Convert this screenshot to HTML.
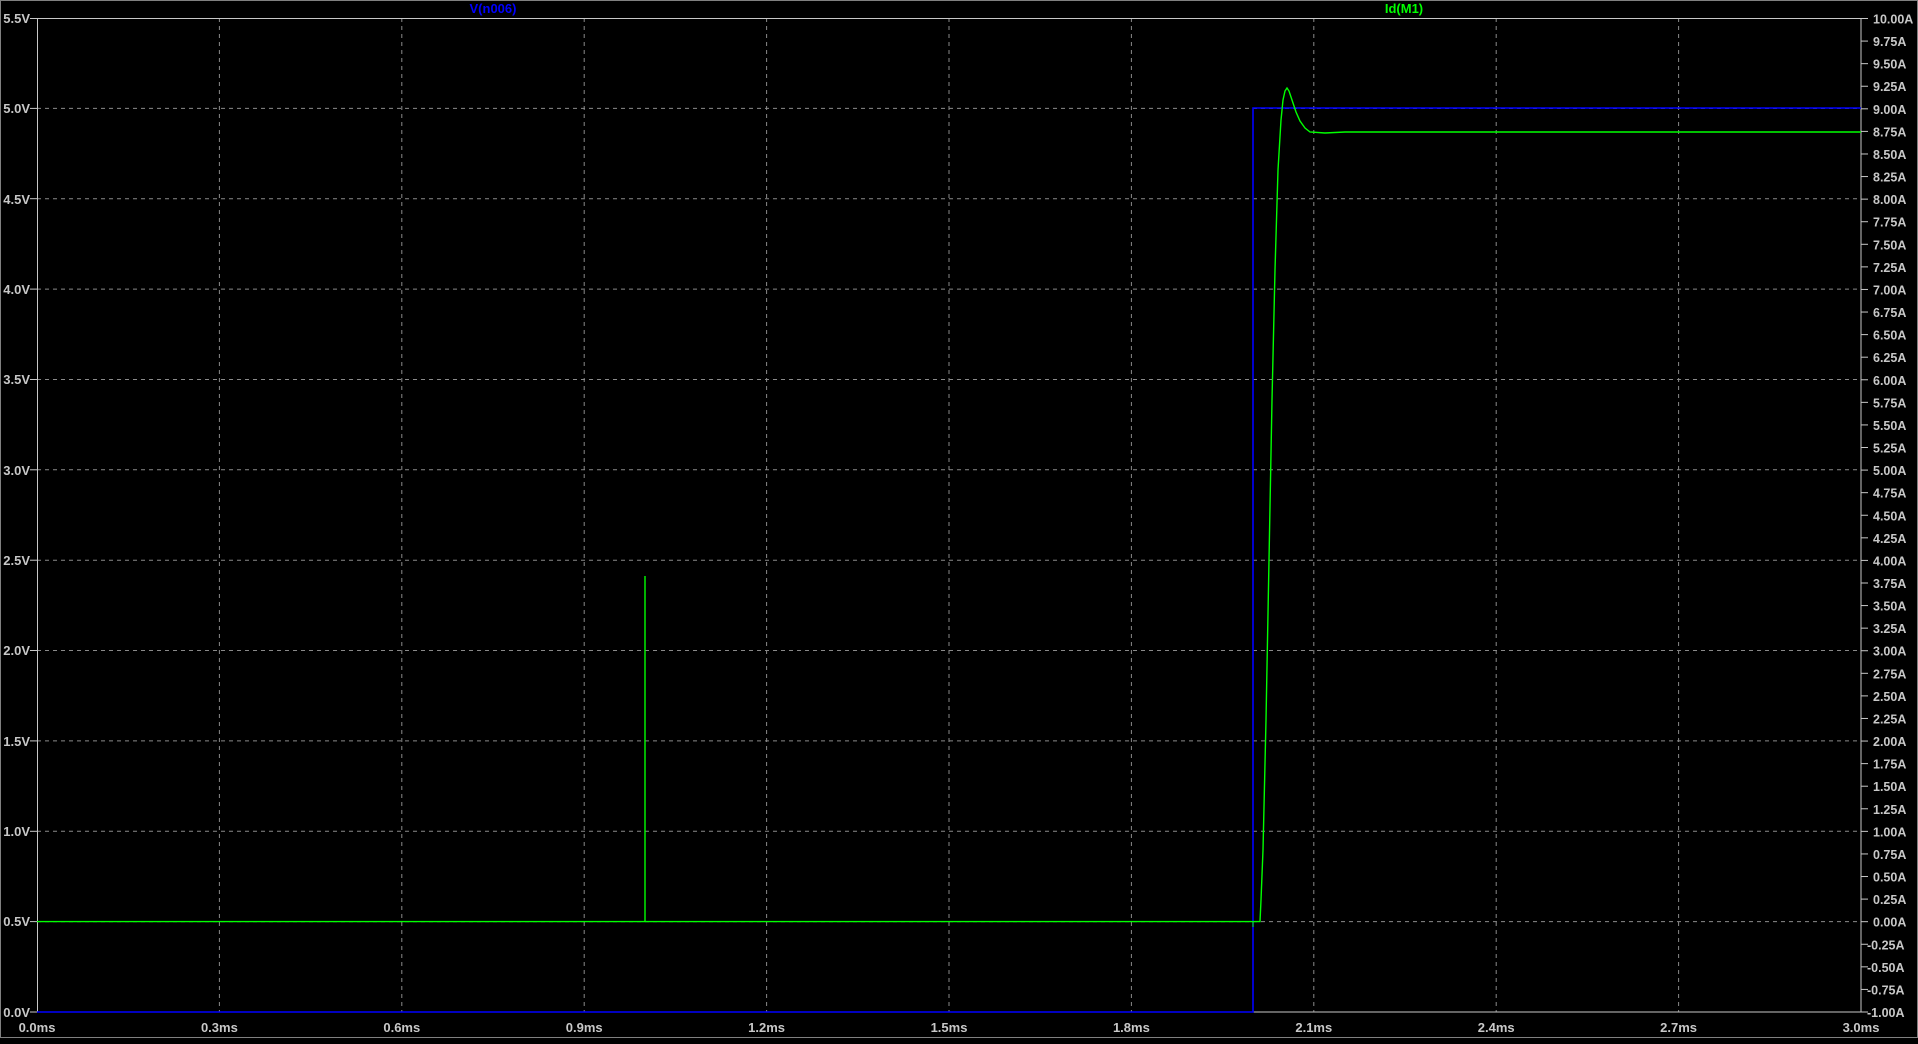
<!DOCTYPE html><html><head><style>html,body{margin:0;background:#000;overflow:hidden}</style></head><body>
<svg width="1918" height="1039" xmlns="http://www.w3.org/2000/svg" font-family="Liberation Sans, sans-serif" font-size="13" font-weight="bold">
<rect width="1918" height="1039" fill="#000"/>
<rect x="0.5" y="0.5" width="1917" height="1037" fill="none" stroke="#808080"/>
<g id="g" stroke="#808080" stroke-dasharray="4,4" stroke-width="1">
<script>/* none */</script>
</g>
<g stroke="#8a8a8a" stroke-dasharray="4,4">
<line x1="37" x2="1861" y1="108.4" y2="108.4"/><line x1="37" x2="1861" y1="198.7" y2="198.7"/><line x1="37" x2="1861" y1="289.1" y2="289.1"/><line x1="37" x2="1861" y1="379.5" y2="379.5"/><line x1="37" x2="1861" y1="469.8" y2="469.8"/><line x1="37" x2="1861" y1="560.2" y2="560.2"/><line x1="37" x2="1861" y1="650.5" y2="650.5"/><line x1="37" x2="1861" y1="740.9" y2="740.9"/><line x1="37" x2="1861" y1="831.3" y2="831.3"/><line x1="37" x2="1861" y1="921.6" y2="921.6"/>
<line y1="18" y2="1012" x1="219.4" x2="219.4"/><line y1="18" y2="1012" x1="401.8" x2="401.8"/><line y1="18" y2="1012" x1="584.2" x2="584.2"/><line y1="18" y2="1012" x1="766.6" x2="766.6"/><line y1="18" y2="1012" x1="949" x2="949"/><line y1="18" y2="1012" x1="1131.4" x2="1131.4"/><line y1="18" y2="1012" x1="1313.8" x2="1313.8"/><line y1="18" y2="1012" x1="1496.2" x2="1496.2"/><line y1="18" y2="1012" x1="1678.6" x2="1678.6"/>
</g>
<rect x="37.5" y="18.5" width="1823.5" height="993.5" fill="none" stroke="#c8c8c8"/>
<g fill="#c8c8c8" text-anchor="end" id="L">
<text x="30" y="23">5.5V</text><text x="30" y="113">5.0V</text><text x="30" y="204">4.5V</text><text x="30" y="294">4.0V</text><text x="30" y="384">3.5V</text><text x="30" y="475">3.0V</text><text x="30" y="565">2.5V</text><text x="30" y="655">2.0V</text><text x="30" y="746">1.5V</text><text x="30" y="836">1.0V</text><text x="30" y="926">0.5V</text><text x="30" y="1017">0.0V</text>
</g>
<g stroke="#c8c8c8">
<line x1="30" x2="37" y1="18.5" y2="18.5"/><line x1="30" x2="37" y1="108.4" y2="108.4"/><line x1="30" x2="37" y1="198.7" y2="198.7"/><line x1="30" x2="37" y1="289.1" y2="289.1"/><line x1="30" x2="37" y1="379.5" y2="379.5"/><line x1="30" x2="37" y1="469.8" y2="469.8"/><line x1="30" x2="37" y1="560.2" y2="560.2"/><line x1="30" x2="37" y1="650.5" y2="650.5"/><line x1="30" x2="37" y1="740.9" y2="740.9"/><line x1="30" x2="37" y1="831.3" y2="831.3"/><line x1="30" x2="37" y1="921.6" y2="921.6"/><line x1="30" x2="37" y1="1012" y2="1012"/>
</g>
<g fill="#c8c8c8" text-anchor="middle">
<text x="37" y="1032">0.0ms</text><text x="219.4" y="1032">0.3ms</text><text x="401.8" y="1032">0.6ms</text><text x="584.2" y="1032">0.9ms</text><text x="766.6" y="1032">1.2ms</text><text x="949" y="1032">1.5ms</text><text x="1131.4" y="1032">1.8ms</text><text x="1313.8" y="1032">2.1ms</text><text x="1496.2" y="1032">2.4ms</text><text x="1678.6" y="1032">2.7ms</text><text x="1861" y="1032">3.0ms</text>
</g>
<g id="R" fill="#c8c8c8" font-size="12.5"></g>
<g id="RT" stroke="#c8c8c8"></g>
<text x="493" y="13" fill="#0000ff" text-anchor="middle">V(n006)</text>
<text x="1404" y="13" fill="#00ff00" text-anchor="middle">Id(M1)</text>
<polyline fill="none" stroke="#0000ff" stroke-width="1.6" points="37,1012 1253,1012 1253,108 1861,108"/>
<polyline fill="none" stroke="#00ff00" stroke-width="1.4" points="37,921.6 645,921.6 645,576 645,921.6 1260,921.6 1261,900 1263,850 1266,720 1269,560 1272,400 1275,270 1278,170 1281,120 1283,100 1285,91 1287,88 1289,91 1292,100 1296,112 1300,121 1305,128 1310,132 1325,133 1345,132 1861,132"/>
<line x1="1253" x2="1253" y1="921" y2="927" stroke="#00ff00"/>
</svg>
<script>
var R=document.getElementById('R'),T=document.getElementById('RT'),ns='http://www.w3.org/2000/svg';
for(var i=0;i<=44;i++){var v=10-i*0.25,y=18.5+i*(993.5/44);
var t=document.createElementNS(ns,'text');t.setAttribute('x',1873);t.setAttribute('y',y+5);t.textContent=(v<0?'-':'')+Math.abs(v).toFixed(2)+'A';if(v<0)t.setAttribute('x',1867);R.appendChild(t);
var l=document.createElementNS(ns,'line');l.setAttribute('x1',1861);l.setAttribute('x2',1868);l.setAttribute('y1',y);l.setAttribute('y2',y);T.appendChild(l);}
</script>
</body></html>
